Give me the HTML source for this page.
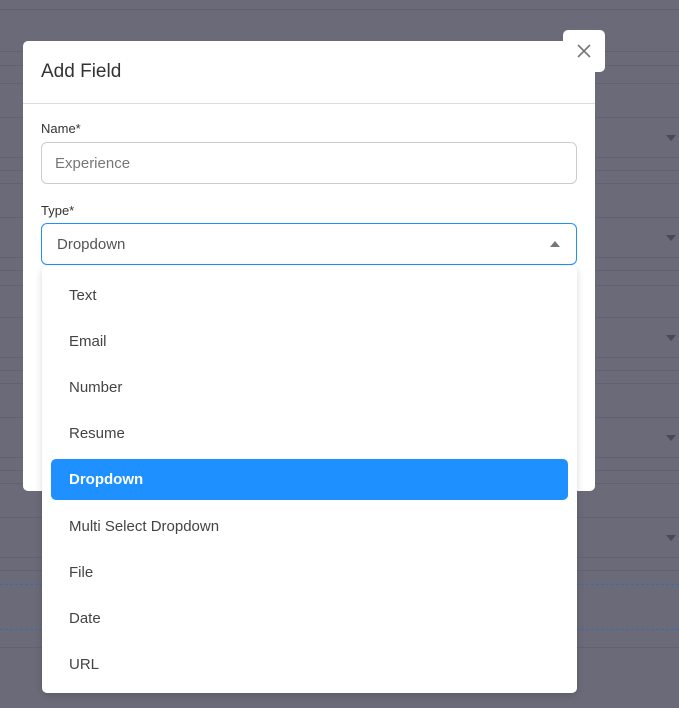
<!DOCTYPE html>
<html><head><style>
body{margin:0;width:679px;height:708px;background:#6b6a78;position:relative;overflow:hidden;font-family:"Liberation Sans",sans-serif;}
.l{position:absolute;left:0;right:0;height:1px;background:#626170;}
.d{position:absolute;left:0;right:0;border-top:1px dashed #3f6aa8;}
.ar{position:absolute;right:3px;width:0;height:0;border-left:5px solid transparent;border-right:5px solid transparent;border-top:6px solid #4b4a57;}
.modal{position:absolute;left:23px;top:41px;width:572px;height:450px;background:#fff;border-radius:5px;}
.hd{height:62px;border-bottom:1px solid #dcdcdc;}
.hd span{position:absolute;left:18px;top:20px;font-size:19px;color:#333;}
.lab{position:absolute;left:18px;font-size:13px;color:#333;}
.inp{position:absolute;left:18px;width:534px;height:40px;border:1px solid #ccc;border-radius:6px;font-size:15px;color:#777;line-height:42px;text-indent:13px;}
.close{position:absolute;left:563px;top:30px;width:42px;height:42px;background:#fff;border-radius:5px;}
.menu{position:absolute;left:42px;top:266px;width:535px;height:427px;background:#fff;border-radius:5px;box-shadow:0 2px 8px rgba(0,0,0,.15);}
.it{position:absolute;left:27px;font-size:15px;color:#444;}
.sel{position:absolute;left:9px;top:193px;width:517px;height:41px;background:#1e90ff;border-radius:5px;}
</style></head><body>
<div class="l" style="top:9px"></div><div class="l" style="top:51px"></div><div class="l" style="top:65px"></div><div class="l" style="top:83px"></div>
<div class="l" style="top:117px"></div><div class="l" style="top:157px"></div><div class="l" style="top:170px"></div><div class="l" style="top:183px"></div>
<div class="l" style="top:217px"></div><div class="l" style="top:257px"></div><div class="l" style="top:270px"></div><div class="l" style="top:285px"></div>
<div class="l" style="top:317px"></div><div class="l" style="top:357px"></div><div class="l" style="top:370px"></div><div class="l" style="top:383px"></div>
<div class="l" style="top:417px"></div><div class="l" style="top:457px"></div><div class="l" style="top:470px"></div><div class="l" style="top:483px"></div>
<div class="l" style="top:517px"></div><div class="l" style="top:557px"></div><div class="l" style="top:570px"></div>
<div class="d" style="top:584px"></div><div class="d" style="top:629px"></div><div class="l" style="top:647px"></div>
<div class="ar" style="top:135px"></div><div class="ar" style="top:235px"></div><div class="ar" style="top:335px"></div><div class="ar" style="top:435px"></div><div class="ar" style="top:535px"></div>
<div class="modal">
<div class="hd"><span>Add Field</span></div>
<div class="lab" style="top:80px">Name*</div>
<div class="inp" style="top:101px">Experience</div>
<div class="lab" style="top:162px">Type*</div>
<div class="inp" style="top:182px;border-color:#1e90ff;color:#555;text-indent:15px">Dropdown<span style="position:absolute;right:16px;top:17px;width:0;height:0;border-left:5px solid transparent;border-right:5px solid transparent;border-bottom:6px solid #777"></span></div>
</div>
<div class="close"><svg width="42" height="42"><path d="M15 15L27 27M27 15L15 27" stroke="#777" stroke-width="1.6"/></svg></div>
<div class="menu">
<div class="it" style="top:21px">Text</div>
<div class="it" style="top:67px">Email</div>
<div class="it" style="top:113px">Number</div>
<div class="it" style="top:159px">Resume</div>
<div class="sel"></div>
<div class="it" style="top:205px;color:#fff;font-weight:bold">Dropdown</div>
<div class="it" style="top:252px">Multi Select Dropdown</div>
<div class="it" style="top:298px">File</div>
<div class="it" style="top:344px">Date</div>
<div class="it" style="top:390px">URL</div>
</div>
</body></html>
